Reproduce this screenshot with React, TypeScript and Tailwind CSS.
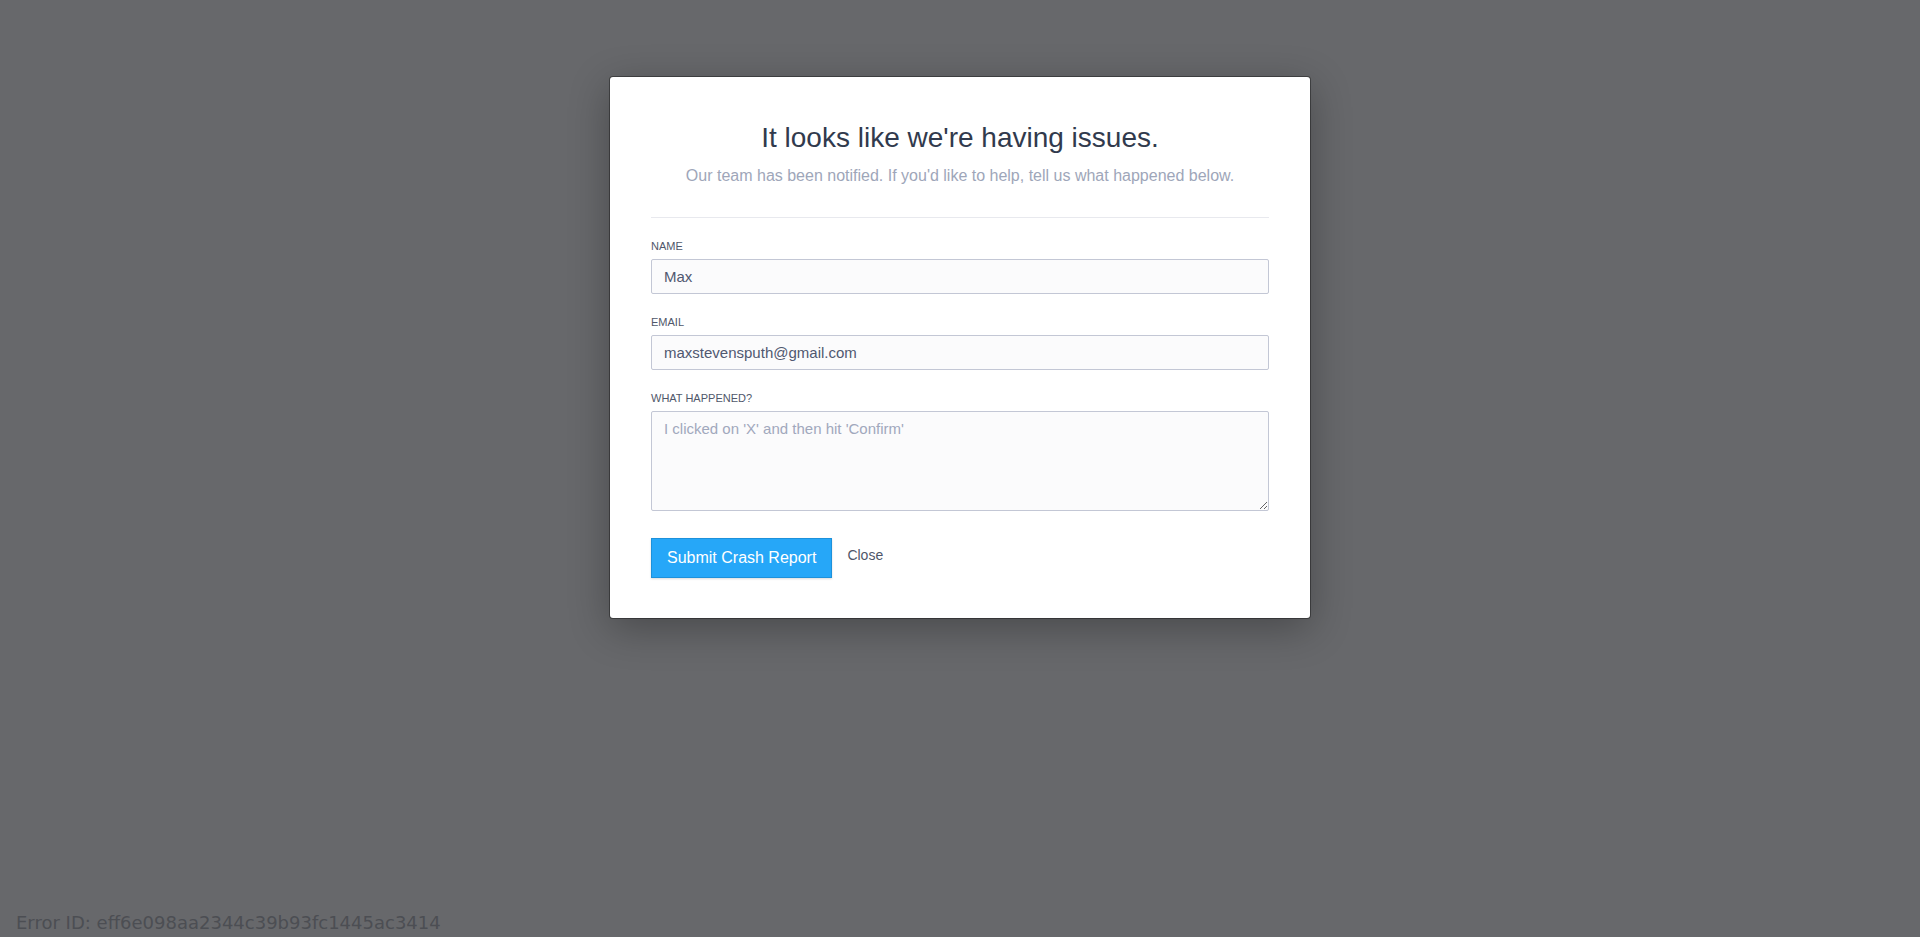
import React from "react";

export default function App() {
  return (
    <div
      className="w-full h-[937px] bg-[#67686b] flex flex-col overflow-hidden"
      style={{ fontFamily: '"Liberation Sans", Arial, Helvetica, sans-serif' }}
    >
      <div className="pt-[77px] flex justify-center">
        <div className="w-[700px] bg-white rounded-[3px] shadow-[0_0_0_1px_rgba(0,0,0,0.35),0_10px_40px_rgba(0,0,0,0.3)] pl-[41px] pr-[41px] pt-[40px] pb-[40px]">
          <header className="text-center border-b border-[#e8e9ee] pb-[32px]">
            <h2 className="mt-[5px] text-[28px] leading-[32px] font-normal text-[#313a4d]">
              It looks like we're having issues.
            </h2>
            <p className="mt-[13px] text-[16px] leading-[18px] text-[#9ea6b9]">
              Our team has been notified. If you'd like to help, tell us what happened below.
            </p>
          </header>
          <form className="pt-[22px]" onSubmit={(e) => e.preventDefault()}>
            <div className="mb-[22px]">
              <label className="block text-[11px] leading-[13px] uppercase text-[#50576a] mb-[6px]">
                Name
              </label>
              <input
                type="text"
                defaultValue="Max"
                className="block w-full h-[35px] px-[12px] bg-[#fbfbfc] border border-[#c3c7d5] rounded-[2px] text-[15px] text-[#505870] outline-none"
                style={{ fontFamily: '"Liberation Sans", Arial, sans-serif' }}
              />
            </div>
            <div className="mb-[22px]">
              <label className="block text-[11px] leading-[13px] uppercase text-[#50576a] mb-[6px]">
                Email
              </label>
              <input
                type="text"
                defaultValue="maxstevensputh@gmail.com"
                className="block w-full h-[35px] px-[12px] bg-[#fbfbfc] border border-[#c3c7d5] rounded-[2px] text-[15px] text-[#505870] outline-none"
                style={{ fontFamily: '"Liberation Sans", Arial, sans-serif' }}
              />
            </div>
            <div>
              <label className="block text-[11px] leading-[13px] uppercase text-[#50576a] mb-[6px]">
                What happened?
              </label>
              <textarea
                placeholder="I clicked on 'X' and then hit 'Confirm'"
                className="block w-full h-[100px] px-[12px] py-[8px] bg-[#fbfbfc] border border-[#c3c7d5] rounded-[2px] text-[15px] leading-[17px] text-[#505870] placeholder:text-[#a1a8bc] outline-none resize"
                style={{ fontFamily: '"Liberation Sans", Arial, sans-serif' }}
              />
            </div>
            <div className="mt-[27px] flex items-center">
              <button
                type="submit"
                className="h-[40px] px-[15px] bg-[#26a7f8] border border-[#1d91db] text-white text-[16px] leading-[18px] shadow-[0_1px_2px_rgba(0,0,0,0.15)]"
              >
                Submit Crash Report
              </button>
              <button
                type="button"
                className="ml-[15px] text-[14px] leading-[16px] text-[#4e5669] -mt-[6px]"
              >
                Close
              </button>
            </div>
          </form>
        </div>
      </div>
      <div
        className="mt-auto pl-[16px] pb-[4px] text-[18px] leading-[21px] text-[#4c4e53]"
        style={{ fontFamily: '"DejaVu Sans", sans-serif' }}
      >
        Error ID: eff6e098aa2344c39b93fc1445ac3414
      </div>
    </div>
  );
}
